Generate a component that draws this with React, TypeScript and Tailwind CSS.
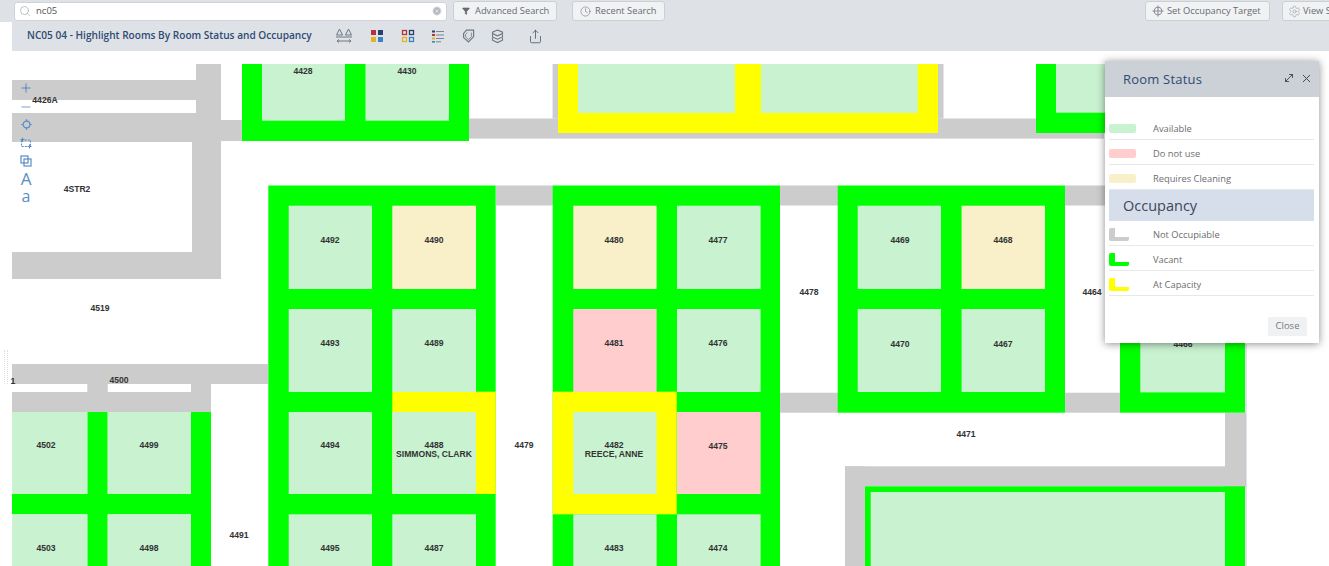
import { Search, Clock, Settings, Plus, Minus, X, MoveDiagonal, Funnel, CircleX, Share } from "lucide-react";

const GRAY = "#cccccc", GREEN = "#00ff00", YELLOW = "#ffff00", ROOM = "#c8f2d0", PINK = "#ffcdcd", CREAM = "#f9f0c9";
const R1: [number, number] = [205.7, 289], R2: [number, number] = [309, 392], R3: [number, number] = [412, 494], R4: [number, number] = [514.3, 566];
const b = (x1: number, y1: number, x2: number, y2: number, f: string): [number, number, number, number, string] => [x1, y1, x2, y2, f];
const room = (x: [number, number], y: [number, number], f = ROOM) => b(x[0], y[0], x[1], y[1], f);
const A1: [number, number] = [288.7, 372], A2: [number, number] = [392.3, 476], B1: [number, number] = [573.3, 656.6], B2: [number, number] = [677, 760.6], C1: [number, number] = [857.7, 941], C2: [number, number] = [961.6, 1045], L1: [number, number] = [12, 87.3], L2: [number, number] = [107.7, 191];

const shapes = [
  // corridors
  b(12, 80, 196, 100, GRAY), b(12, 113, 221, 142, GRAY), b(196, 64, 221, 113, GRAY), b(192, 142, 221, 279, GRAY), b(12, 252, 221, 279, GRAY), b(221, 120, 242, 141, GRAY),
  b(469, 118.5, 1104, 138.6, GRAY), b(552.6, 64, 558, 118.5, GRAY), b(938, 64, 943.5, 118.5, GRAY),
  b(496, 185.5, 553, 205.5, GRAY), b(780, 185.5, 838, 205.5, GRAY), b(1065, 185.5, 1106, 205.5, GRAY),
  b(780, 392.7, 838, 412.7, GRAY), b(1065, 392.7, 1120, 412.7, GRAY),
  b(1225, 412.7, 1246, 487, GRAY), b(845, 466.3, 1246, 486.3, GRAY), b(845, 466.3, 865, 566, GRAY),
  b(12, 364, 268, 384, GRAY), b(12, 392, 211, 412, GRAY), b(87.3, 384, 107.7, 392, GRAY), b(191, 384, 211, 392, GRAY),
  // occupancy blocks
  b(242, 64, 469, 141, GREEN), b(558, 64, 938, 133, YELLOW), b(1036, 64, 1106, 133, GREEN),
  b(268.3, 185.5, 495.7, 566, GREEN), b(552.7, 185.5, 780, 566, GREEN), b(837.7, 185.5, 1065, 412.7, GREEN), b(1120, 200, 1245, 412.7, GREEN),
  b(865, 486.3, 1245, 566, GREEN),
  b(87.3, 412, 107.7, 566, GREEN), b(191, 412, 211, 566, GREEN), b(12, 494, 211, 514.3, GREEN),
  b(392.3, 391.7, 495.7, 494, YELLOW), b(552.7, 391.7, 676.7, 514.3, YELLOW),
  // rooms
  b(262, 64, 345, 120.7, ROOM), b(365.5, 64, 449, 120.7, ROOM), b(578, 64, 735, 113, ROOM), b(761, 64, 917.7, 113, ROOM), b(1056, 64, 1106, 112.7, ROOM),
  room(A1, R1), room(A2, R1, CREAM), room(A1, R2), room(A2, R2), room(A1, R3), room(A2, R3), room(A1, R4), room(A2, R4),
  room(B1, R1, CREAM), room(B2, R1), room(B1, R2, PINK), room(B2, R2), room(B1, R3), room(B2, R3, PINK), room(B1, R4), room(B2, R4),
  room(C1, R1), room(C2, R1, CREAM), room(C1, R2), room(C2, R2), b(1140.3, 300, 1225, 392.4, ROOM),
  room(L1, R3), room(L2, R3), room(L1, R4), room(L2, R4), b(870.7, 492, 1225, 566, ROOM),
  b(1245.5, 344, 1246.5, 566, "#c3c8d2"),
];

const labels: [string, number, number][] = [
  ["4428", 303, 71], ["4430", 407, 71], ["4426A", 45, 100], ["4STR2", 77, 189], ["4519", 100, 308], ["1", 13, 381], ["4500", 119, 380],
  ["4502", 46, 445], ["4499", 149, 445], ["4491", 239, 535], ["4503", 46, 548], ["4498", 149, 548],
  ["4492", 330, 240], ["4490", 434, 240], ["4493", 330, 343], ["4489", 434, 343], ["4494", 330, 445], ["4488", 434, 445], ["SIMMONS, CLARK", 434, 454],
  ["4479", 524, 445], ["4482", 614, 445], ["REECE, ANNE", 614, 454], ["4475", 718, 446], ["4495", 330, 548], ["4487", 434, 548], ["4483", 614, 548], ["4474", 718, 548],
  ["4480", 614, 240], ["4477", 718, 240], ["4481", 614, 343], ["4476", 718, 343], ["4478", 809, 292], ["4469", 900, 240], ["4468", 1003, 240],
  ["4470", 900, 344], ["4467", 1003, 344], ["4464", 1092, 292], ["4466", 1183, 344], ["4471", 966, 434],
];

function Plan() {
  return (
    <svg width={1329} height={515} viewBox="0 51 1329 515" className="block">
      {shapes.map(([x1, y1, x2, y2, f], i) => (
        <rect key={i} x={x1} y={y1} width={x2 - x1} height={y2 - y1} fill={f} />
      ))}
      {labels.map(([t, x, y]) => (
        <text key={t} x={x} y={y + 3} textAnchor="middle" className="fill-[#333333] font-['Liberation_Sans',sans-serif] text-[8.6px] font-bold">
          {t}
        </text>
      ))}
    </svg>
  );
}

function HeaderButton({ icon, label, className = "" }: { icon: React.ReactNode; label: string; className?: string }) {
  return (
    <button className={`flex h-[20px] shrink-0 items-center rounded-[3px] border border-[#ccd0d5] bg-[#f1f2f4] text-[9.3px] text-[#666b70] ${className}`}>
      {icon}
      <span className="whitespace-nowrap">{label}</span>
    </button>
  );
}

function ToolIcons() {
  return (
    <div className="flex items-center">
      <svg width="18" height="16" viewBox="0 0 18 16" fill="none" stroke="#6d7782" strokeWidth="1">
        <path d="M4.5 1 L1.5 7 H7.5 Z M13.5 1 L10.5 7 H16.5 Z" /><path d="M1 9 H17" /><path d="M2 13 H16 M4 11.5 L2 13 L4 14.5 M14 11.5 L16 13 L14 14.5" />
      </svg>
      <svg width="14" height="14" viewBox="0 0 14 14" className="ml-[17px]">
        <rect x="1" y="1" width="5" height="5" fill="#b5343c" /><rect x="8" y="1" width="5" height="5" fill="#25416d" />
        <rect x="1" y="8" width="5" height="5" fill="#e0b520" /><rect x="8" y="8" width="5" height="5" fill="#3b7fc4" />
      </svg>
      <svg width="14" height="14" viewBox="0 0 14 14" fill="none" strokeWidth="1.3" className="ml-[17px]">
        <rect x="1.5" y="1.5" width="4" height="4" stroke="#b5343c" /><rect x="8.5" y="1.5" width="4" height="4" stroke="#25416d" />
        <rect x="1.5" y="8.5" width="4" height="4" stroke="#e0b520" /><rect x="8.5" y="8.5" width="4" height="4" stroke="#3b7fc4" />
      </svg>
      <svg width="14" height="14" viewBox="0 0 14 14" className="ml-[16px]">
        <rect x="1" y="1.5" width="3" height="2" fill="#25416d" /><rect x="5" y="2" width="8" height="1" fill="#7b848d" />
        <rect x="1" y="5" width="3" height="2" fill="#b5343c" /><rect x="5" y="5.5" width="8" height="1" fill="#7b848d" />
        <rect x="1" y="8.5" width="3" height="2" fill="#e0b520" /><rect x="5" y="9" width="8" height="1" fill="#7b848d" />
        <rect x="1" y="12" width="3" height="1.6" fill="#3b7fc4" /><rect x="5" y="12.3" width="5" height="1" fill="#7b848d" />
      </svg>
      <svg width="14" height="14" viewBox="0 0 14 14" fill="none" stroke="#6d7782" strokeWidth="1.2" className="ml-[16px]">
        <path d="M5.5 1.2 H12.6 V7.6 L7.5 13 L2.6 8.6 V4.4 Z" /><path d="M6.5 3.6 L4.6 5.4 V8 L7.5 10.6 L10.4 7.4 V3.6" strokeWidth="0.8" />
      </svg>
      <svg width="15" height="15" viewBox="0 0 15 15" fill="none" stroke="#6d7782" strokeWidth="1.1" className="ml-[15px]">
        <path d="M7.5 1 L12.5 3.2 V4.6 L7.5 6.8 L2.5 4.6 V3.2 Z" /><path d="M2.5 5.2 V8 L7.5 10.2 L12.5 8 V5.2" /><path d="M2.5 8.8 V11.2 L7.5 13.6 L12.5 11.2 V8.8" />
      </svg>
      <Share size={15} strokeWidth={1.3} color="#4f5862" className="ml-[23px]" />
    </div>
  );
}

function MapTools() {
  const c = "#5b8cc6";
  return (
    <div className="absolute left-[19px] top-[30px] flex w-[14px] flex-col items-center font-['Open_Sans',sans-serif] text-[#5b8cc6]">
      <Plus size={14} strokeWidth={1.4} color="#3f78bb" />
      <Minus size={14} strokeWidth={1.4} color={c} className="mt-[5px]" />
      <svg width="11" height="11" viewBox="0 0 11 11" fill="none" stroke={c} strokeWidth="1.2" className="mt-[4.5px]">
        <circle cx="5.5" cy="5.5" r="3.4" /><path d="M5.5 0.3V2M5.5 9V10.7M0.3 5.5H2M9 5.5H10.7" />
      </svg>
      <svg width="12" height="12" viewBox="0 0 12 12" fill="none" stroke={c} strokeWidth="1.1" className="mt-[7px]">
        <path d="M1.5 3 H10.5 V9.5 H1.5 Z" strokeDasharray="2 1.2" /><path d="M2.5 0.8V5M0.5 2.5H4.5M9.5 7.5V11.5M7.5 9.5H11.5" />
      </svg>
      <svg width="12" height="12" viewBox="0 0 12 12" fill="none" stroke={c} strokeWidth="1.2" className="mt-[6px]">
        <rect x="1" y="1" width="7" height="7" /><rect x="4" y="4" width="7" height="7" />
      </svg>
      <span className="mt-[3px] text-[17px] leading-[18px]">A</span>
      <span className="text-[16px] leading-[16px]">a</span>
    </div>
  );
}

function LegendRow({ swatch, label }: { swatch: React.ReactNode; label: string }) {
  return (
    <div className="flex h-[25px] items-center border-b border-[#e6e8ea] pt-[3px]">
      <div className="w-[44px] shrink-0">{swatch}</div>
      <span className="text-[9.3px] text-[#6a6d70]">{label}</span>
    </div>
  );
}
const Fill = ({ className }: { className: string }) => <div className={`h-[9px] w-[27px] rounded-[2px] ${className}`} />;

function Panel() {
  return (
    <div className="absolute left-[1105px] top-[10px] flex h-[282px] w-[214px] flex-col bg-white font-['Open_Sans',sans-serif] shadow-[0_1px_8px_rgba(0,0,0,0.45)]">
      <div className="flex h-[36px] shrink-0 items-center justify-between bg-[#cbd1d6] pl-[18px] pr-[6px]">
        <span className="pt-[2px] text-[13px] tracking-[0.2px] text-[#2f4a74]">Room Status</span>
        <div className="mb-[2px] flex items-center gap-[5px] text-[#3c4650]">
          <MoveDiagonal size={12} strokeWidth={1.8} />
          <X size={13} strokeWidth={1.8} />
        </div>
      </div>
      <div className="flex flex-1 flex-col px-[4px] pt-[18px]">
        <div className="w-[205px]">
          <LegendRow label="Available" swatch={<Fill className="bg-[#c8f2d0]" />} />
          <LegendRow label="Do not use" swatch={<Fill className="bg-[#ffcdcd]" />} />
          <LegendRow label="Requires Cleaning" swatch={<Fill className="bg-[#f9f0c9]" />} />
          <div className="flex h-[31px] items-center bg-[#d6deec] pl-[14px] text-[14.5px] text-[#3d4657]">Occupancy</div>
          <LegendRow label="Not Occupiable" swatch={<div className="h-[13px] w-[20px] rounded-[2px] border-b-[4px] border-l-[6px] border-[#cccccc]" />} />
          <LegendRow label="Vacant" swatch={<div className="h-[13px] w-[20px] rounded-[2px] border-b-[4px] border-l-[6px] border-[#00ff00]" />} />
          <LegendRow label="At Capacity" swatch={<div className="h-[13px] w-[20px] rounded-[2px] border-b-[4px] border-l-[6px] border-[#ffff00]" />} />
        </div>
        <div className="mt-[21px] flex justify-end pr-[8px]">
          <button className="h-[19px] w-[39px] rounded-[2px] bg-[#f0f1f3] text-[9.5px] text-[#777b80]">Close</button>
        </div>
      </div>
    </div>
  );
}

export default function App() {
  return (
    <div className="h-[566px] w-[1329px] overflow-hidden bg-white font-['Open_Sans',sans-serif]">
      <div className="flex h-[22px] items-center overflow-hidden bg-[#dee2e6] pl-[14px]">
        <div className="flex h-[19px] w-[433px] shrink-0 items-center rounded-[3px] border border-[#d0d4d8] bg-white pl-[4px] pr-[4px] text-[9.5px] text-[#555]">
          <Search size={12} strokeWidth={1.3} color="#9aa0a6" />
          <span className="ml-[5px] flex-1">nc05</span>
          <CircleX size={10} fill="#b5b9bd" color="#e6e8ea" />
        </div>
        <HeaderButton className="ml-[6px] w-[104px] gap-[5px] pl-[8px]" icon={<Funnel size={8} fill="#666b70" color="#666b70" />} label="Advanced Search" />
        <HeaderButton className="ml-[15px] w-[93px] gap-[4px] pl-[7px]" icon={<Clock size={11} strokeWidth={1.2} />} label="Recent Search" />
        <HeaderButton
          className="ml-[480px] w-[125px] gap-[3px] pl-[6px]"
          icon={
            <svg width="12" height="12" viewBox="0 0 12 12" fill="none" stroke="#8a8f95" strokeWidth="1.1">
              <circle cx="6" cy="6" r="3.8" /><path d="M6 0.5V11.5M0.5 6H11.5" />
            </svg>
          }
          label="Set Occupancy Target"
        />
        <HeaderButton className="ml-[12px] w-[110px] gap-[2px] pl-[5px]" icon={<Settings size={13} strokeWidth={1} color="#8a8f95" />} label="View Settings" />
      </div>
      <div className="ml-[12px] flex h-[29px] items-center bg-[#dee2e6] pb-[1px] pl-[15px]">
        <span className="w-[308px] shrink-0 whitespace-nowrap text-[10.1px] font-semibold text-[#2f4a74]">NC05 04 - Highlight Rooms By Room Status and Occupancy</span>
        <ToolIcons />
      </div>
      <div className="relative h-[515px]">
        <Plan />
        <MapTools />
        <div className="absolute left-[4px] top-[299px] h-[34px] w-[4px] border-x border-dotted border-[#dfe2e5]" />
        <Panel />
      </div>
    </div>
  );
}
